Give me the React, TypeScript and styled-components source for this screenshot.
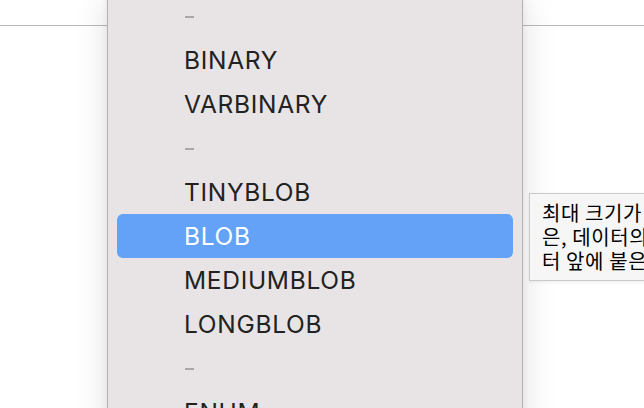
import React from "react";
import styled, { createGlobalStyle } from "styled-components";

const Global = createGlobalStyle`
  html, body { margin: 0; padding: 0; background: #ffffff; overflow: hidden; }
  body { width: 644px; height: 408px; font-family: Inter, "Noto Sans", sans-serif; }
`;

const Page = styled.div`
  position: relative;
  width: 644px;
  height: 408px;
  overflow: hidden;
  background: #ffffff;
`;

const HeaderBar = styled.div`
  height: 26px;
  border-bottom: 1.5px solid #bababa;
  box-sizing: border-box;
`;

const Menu = styled.div`
  position: absolute;
  left: 107px;
  top: -6px;
  width: 416px;
  height: 460px;
  box-sizing: border-box;
  background: #e8e4e5;
  border-left: 1px solid #b4b2b3;
  border-right: 1px solid #b4b2b3;
  box-shadow: 0 4px 32px rgba(0, 0, 0, 0.13), 0 0 6px rgba(0, 0, 0, 0.07);
  display: flex;
  flex-direction: column;
  padding: 0 9px;
`;

const Item = styled.div<{ $active?: boolean }>`
  height: 44px;
  flex: none;
  display: flex;
  align-items: center;
  padding-left: 67px;
  border-radius: 6px;
  font-family: Inter, "Noto Sans", sans-serif;
  font-size: 24.5px;
  letter-spacing: 0.7px;
  color: ${(p) => (p.$active ? "#ffffff" : "#222222")};
  background: ${(p) => (p.$active ? "#64a2f7" : "transparent")};
`;

const Separator = styled.div`
  height: 44px;
  flex: none;
  display: flex;
  align-items: center;
  padding-left: 68px;
`;

const Dash = styled.span`
  display: block;
  width: 9px;
  height: 2px;
  margin-top: 2px;
  background: #a9a7a8;
`;

const Tooltip = styled.div`
  position: absolute;
  left: 529px;
  top: 193px;
  width: 360px;
  height: 88px;
  box-sizing: border-box;
  padding: 7px 0 0 12px;
  background: #f6f6f6;
  border: 1px solid #c9c9c9;
  box-shadow: 0 1px 3px rgba(0, 0, 0, 0.08);
  font-family: "Noto Sans CJK KR", "Noto Sans", sans-serif;
  font-size: 20px;
  letter-spacing: 0.6px;
  line-height: 24px;
  color: #000000;
`;

const TipLine = styled.div`
  white-space: nowrap;
`;

type Entry = { label?: string; sep?: boolean; active?: boolean };

const entries: Entry[] = [
  { sep: true },
  { label: "BINARY" },
  { label: "VARBINARY" },
  { sep: true },
  { label: "TINYBLOB" },
  { label: "BLOB", active: true },
  { label: "MEDIUMBLOB" },
  { label: "LONGBLOB" },
  { sep: true },
  { label: "ENUM" },
];

export default function App() {
  return (
    <Page>
      <Global />
      <HeaderBar />
      <Menu>
        {entries.map((e, i) =>
          e.sep ? (
            <Separator key={i}>
              <Dash />
            </Separator>
          ) : (
            <Item key={i} $active={e.active}>
              {e.label}
            </Item>
          )
        )}
      </Menu>
      <Tooltip>
        <TipLine>최대 크기가 65,535바이트인 BLOB 열입니다. 각 BLOB 값</TipLine>
        <TipLine>은, 데이터의 바이트 수를 나타내는 2바이트 길이 접두사가 데이</TipLine>
        <TipLine>터 앞에 붙은 상태로 저장됩니다.</TipLine>
      </Tooltip>
    </Page>
  );
}
